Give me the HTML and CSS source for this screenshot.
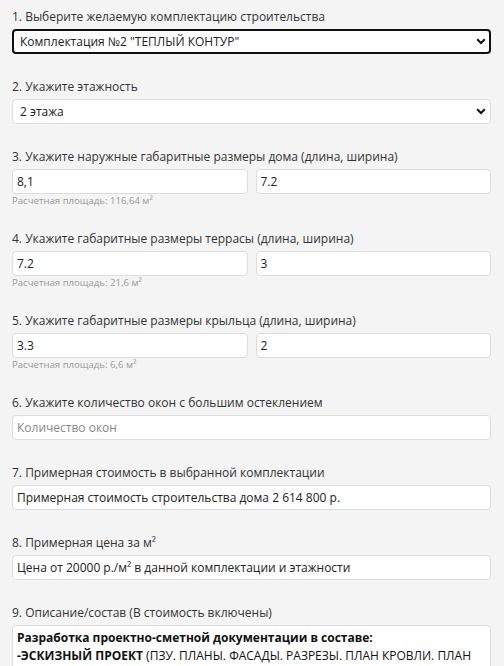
FILE: index.html
```html
<!DOCTYPE html>
<html lang="ru">
<head>
    <meta charset="UTF-8">
    <title>Калькулятор строительства</title>
    <link rel="stylesheet" href="styles.css">
</head>
<body>
    <div class="calc">
        <div class="field">
            <label class="label">1. Выберите желаемую комплектацию строительства</label>
            <div class="select-wrap">
                <select class="select focused">
                    <option>Комплектация №2 "ТЕПЛЫЙ КОНТУР"</option>
                </select>
                <svg class="chevron" width="10" height="7" viewBox="0 0 10 7"><path d="M1.2 1.3 L5 5 L8.8 1.3" fill="none" stroke="#111" stroke-width="2"/></svg>
            </div>
        </div>

        <div class="field">
            <label class="label">2. Укажите этажность</label>
            <div class="select-wrap">
                <select class="select">
                    <option>2 этажа</option>
                </select>
                <svg class="chevron" width="10" height="7" viewBox="0 0 10 7"><path d="M1.2 1.3 L5 5 L8.8 1.3" fill="none" stroke="#111" stroke-width="2"/></svg>
            </div>
        </div>

        <div class="field">
            <label class="label">3. Укажите наружные габаритные размеры дома (длина, ширина)</label>
            <div class="pair">
                <input class="input" type="text" value="8,1">
                <input class="input" type="text" value="7.2">
            </div>
            <div class="hint">Расчетная площадь: 116,64 м²</div>
        </div>

        <div class="field">
            <label class="label">4. Укажите габаритные размеры террасы (длина, ширина)</label>
            <div class="pair">
                <input class="input" type="text" value="7.2">
                <input class="input" type="text" value="3">
            </div>
            <div class="hint">Расчетная площадь: 21,6 м²</div>
        </div>

        <div class="field">
            <label class="label">5. Укажите габаритные размеры крыльца (длина, ширина)</label>
            <div class="pair">
                <input class="input" type="text" value="3.3">
                <input class="input" type="text" value="2">
            </div>
            <div class="hint">Расчетная площадь: 6,6 м²</div>
        </div>

        <div class="field">
            <label class="label">6. Укажите количество окон с большим остеклением</label>
            <input class="input" type="text" placeholder="Количество окон">
        </div>

        <div class="field">
            <label class="label">7. Примерная стоимость в выбранной комплектации</label>
            <div class="box">Примерная стоимость строительства дома 2 614 800 р.</div>
        </div>

        <div class="field">
            <label class="label">8. Примерная цена за м²</label>
            <div class="box">Цена от 20000 р./м² в данной комплектации и этажности</div>
        </div>

        <div class="field">
            <label class="label">9. Описание/состав (В стоимость включены)</label>
            <div class="box desc">
                <strong>Разработка проектно-сметной документации в составе:</strong><br>
                <strong>-ЭСКИЗНЫЙ ПРОЕКТ</strong> (ПЗУ. ПЛАНЫ. ФАСАДЫ. РАЗРЕЗЫ. ПЛАН КРОВЛИ. ПЛАН ЭТАЖЕЙ. ВИЗУАЛИЗАЦИЯ)
            </div>
        </div>
    </div>
</body>
</html>
```

FILE: styles.css
```css
body {
    margin: 0;
    background: #f4f4f4;
    font-family: 'Open Sans', 'Liberation Sans', sans-serif;
    font-size: 12px;
    color: #333;
    overflow: hidden;
}
.calc {
    padding: 8px 13px 0 12px;
}
.field {
    margin-bottom: 24px;
}
.label {
    display: block;
    height: 17px;
    line-height: 17px;
    margin-bottom: 4px;
}
.select-wrap {
    position: relative;
}
.select {
    display: block;
    width: 100%;
    height: 25px;
    box-sizing: border-box;
    appearance: none;
    -webkit-appearance: none;
    background: #fff;
    border: 1px solid #ddd;
    border-radius: 4px;
    padding: 0 7px;
    font-family: inherit;
    font-size: 12px;
    color: #222;
    outline: none;
}
.select.focused {
    border: 2px solid #111;
    padding: 0 6px;
}
.chevron {
    position: absolute;
    right: 5px;
    top: 9px;
    pointer-events: none;
}
.pair {
    display: grid;
    grid-template-columns: 1fr 1fr;
    gap: 8px;
}
.input {
    display: block;
    width: 100%;
    height: 25px;
    box-sizing: border-box;
    background: #fff;
    border: 1px solid #ddd;
    border-radius: 4px;
    padding: 0 4px;
    font-family: inherit;
    font-size: 12px;
    color: #222;
    outline: none;
}
.input::placeholder {
    color: #888;
}
.hint {
    font-size: 9.6px;
    color: #999;
    height: 11px;
    line-height: 11px;
    margin-top: 1px;
}
.box {
    background: #fff;
    border: 1px solid #ddd;
    border-radius: 4px;
    padding: 0 4px;
    height: 25px;
    line-height: 23px;
    box-sizing: border-box;
    color: #222;
    overflow: hidden;
}
.desc {
    height: auto;
    line-height: 18px;
    padding: 3px 4px;
    color: #111;
}
```
